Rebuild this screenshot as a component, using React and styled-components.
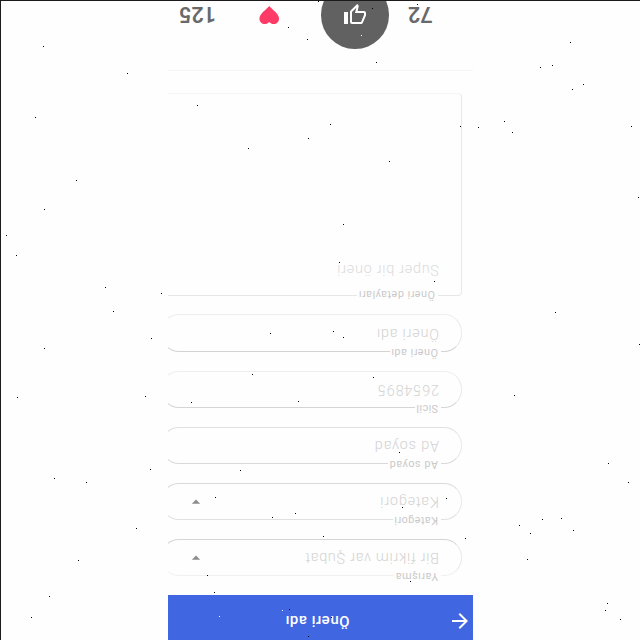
import React from "react";
import styled, { createGlobalStyle } from "styled-components";
import {
  MdArrowBack,
  MdArrowDropDown,
  MdFavorite,
  MdOutlineThumbDown,
} from "react-icons/md";

const GlobalStyle = createGlobalStyle`
  * { box-sizing: border-box; }
  body { margin: 0; background: #fefefe; font-family: Roboto, "Liberation Sans", sans-serif; }
`;

const Canvas = styled.main`
  position: relative;
  display: flex;
  width: 640px;
  height: 640px;
  overflow: hidden;
  padding-left: 167px;
  background: #fefefe;
  border-top: 1px solid #1c1a1c;
  border-left: 1px solid #1c1a1c;
`;

const Screen = styled.section`
  display: flex;
  flex-direction: column;
  width: 305px;
  height: 639px;
  overflow: hidden;
  transform: rotate(180deg);
`;

const Header = styled.header`
  display: grid;
  grid-template-columns: 24px 1fr;
  align-items: center;
  flex: none;
  height: 45px;
  padding: 0 0 7px 1px;
  background: #4066e2;
  color: #fff;
`;

const Title = styled.h1`
  margin: 0;
  padding-left: 98.5px;
  font-size: 15px;
  font-weight: 500;
  line-height: 20px;
  letter-spacing: 0.5px;
`;

const Form = styled.div`
  display: flex;
  flex-direction: column;
  flex: none;
  height: 525px;
  padding: 19px 0 0 11px;
  gap: 19px;
  border-bottom: 1px solid #f5f5f5;
`;

const Field = styled.div`
  display: flex;
  flex-direction: column;
  flex: none;
  width: 301px;
  height: ${(p) => p.$height || 37}px;
  padding-left: 22px;
  border: 1px solid #e9e9e9;
  border-top-color: ${(p) => p.$top};
  border-bottom-color: ${(p) => p.$bottom};
  border-radius: ${(p) => p.$radius || 18}px;
  margin-bottom: ${(p) => p.$gap || 0}px;
`;

const Label = styled.label`
  align-self: flex-start;
  height: 10px;
  margin: ${(p) => p.$rise || -7}px 0 0 ${(p) => p.$indent || -2}px;
  padding: 0 1px 0 3px;
  background: #fefefe;
  color: #c9c9c9;
  font-size: 10.8px;
  line-height: 12px;
  letter-spacing: ${(p) => p.$track}px;
  white-space: nowrap;
`;

const Value = styled.div`
  display: flex;
  align-items: center;
  height: 32px;
  margin-top: ${(p) => p.$offset || -2}px;
  color: ${(p) => p.$color || "#d3d3d3"};
  font-size: 14.5px;
  font-weight: 300;
  letter-spacing: ${(p) => p.$track}px;
  white-space: nowrap;
`;

const Caret = styled(MdArrowDropDown)`
  flex: none;
  width: 20px;
  height: 20px;
  margin-left: auto;
  margin-right: 24px;
  color: #8c8c8c;
`;

const Stats = styled.footer`
  display: grid;
  grid-template-columns: 84px 68px 103px 50px;
  align-items: center;
  justify-items: center;
  flex: none;
  height: 110px;
`;

const Count = styled.span`
  justify-self: start;
  padding: 1px 0 0 ${(p) => p.$pad}px;
  color: #696969;
  font-size: 21.5px;
  font-weight: 600;
  line-height: 24px;
`;

const VoteButton = styled.button`
  display: grid;
  place-items: center;
  width: 67.5px;
  height: 67.5px;
  padding: 0;
  border: 0;
  border-radius: 50%;
  background: #616161;
  color: #fff;
`;

const Heart = styled(MdFavorite)`
  width: 23.5px;
  height: 23.5px;
  color: #fe3b67;
`;

const Specks = styled.svg`
  position: absolute;
  left: -1px;
  top: -1px;
  pointer-events: none;
`;

const fields = [
  { label: "Yarışma", value: "Bir fikrim var Şubat", select: true, top: "#f1f1f1", bottom: "#d5d5d5", lt: 0.5, vt: 0.7 },
  { label: "Kategori", value: "Kategori", select: true, top: "#e0e0e0", bottom: "#dadada", lt: 0.45, vt: 0.75 },
  { label: "Ad soyad", value: "Ad soyad", top: "#d9d9d9", bottom: "#e0e0e0", lt: 0.55, vt: 0.8 },
  { label: "Sicil", value: "2654895", top: "#d5d5d5", bottom: "#efefef", lt: 0.4, vt: 0.8 },
  { label: "Öneri adı", value: "Öneri adı", top: "#d3d3d3", bottom: "#eeeeee", height: 38, gap: -1, lt: 0.5, vt: 0.75 },
];

const darkSpecks = [
  [43,46],[127,73],[35,117],[76,180],[44,209],[6,235],[16,255],[105,287],[113,311],[161,293],
  [151,338],[44,348],[17,397],[145,396],[54,478],[86,482],[150,469],[136,528],[78,560],[49,596],[31,617],
  [570,42],[540,67],[552,65],[583,84],[572,89],[478,127],[504,121],[512,132],[631,126],[638,197],[555,312],
  [639,344],[514,395],[608,463],[628,482],[542,519],[561,518],[519,525],[530,533],[573,530],[527,559],
  [607,603],[605,610],[620,619],[197,105],[330,124],[308,138],[248,148],[389,161],[460,126],[343,224],
  [339,262],[288,27],[307,39],[376,62],[318,1],[372,8],[417,4],[434,281],[333,331],[343,337],
  [373,377],[399,452],[446,498],[402,507],[295,513],[323,536],[465,538],[410,581],[308,636],[289,609],
  [331,617],[240,470],[215,497],[272,517],[207,575],[214,592],[270,333],[252,374],[191,402],[298,401],
];
const lightSpecks = [[361,35],[282,610],[219,616]];
const dots = (points) => points.map(([x, y]) => `M${x} ${y}h1v1h-1z`).join("");

export default function App() {
  return (
    <>
      <GlobalStyle />
      <Canvas>
        <Screen>
          <Header>
            <MdArrowBack size={24} />
            <Title>Öneri adı</Title>
          </Header>
          <Form>
            {fields.map((f) => (
              <Field key={f.label} $top={f.top} $bottom={f.bottom} $height={f.height} $gap={f.gap}>
                <Label $track={f.lt}>{f.label}</Label>
                <Value $track={f.vt}>
                  {f.value}
                  {f.select && <Caret />}
                </Value>
              </Field>
            ))}
            <Field $top="#e7e7e7" $bottom="#f5f5f5" $height={203} $radius={4}>
              <Label $track={0.5} $indent={1} $rise={-5}>Öneri detayları</Label>
              <Value $track={0.7} $offset={4} $color="#dcdcdc">Super bir öneri</Value>
            </Field>
          </Form>
          <Stats>
            <Count $pad={40.5}>72</Count>
            <VoteButton aria-label="Beğenme">
              <MdOutlineThumbDown size={24} />
            </VoteButton>
            <Heart />
            <Count $pad={2}>125</Count>
          </Stats>
        </Screen>
        <Specks width="640" height="640" shapeRendering="crispEdges" aria-hidden="true">
          <path d={dots(darkSpecks)} fill="#000" />
          <path d={dots(lightSpecks)} fill="#fff" />
        </Specks>
      </Canvas>
    </>
  );
}
